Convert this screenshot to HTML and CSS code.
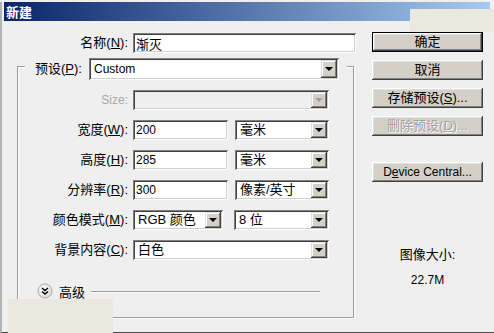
FILE: index.html
```html
<!DOCTYPE html>
<html lang="zh-CN">
<head>
<meta charset="UTF-8">
<title>新建</title>
<link rel="stylesheet" href="styles.css">
</head>
<body>
<div class="window">
  <div class="titlebar">新建</div>
  <div class="body">
    <div class="main">
      <div class="name-row">
        <label class="label">名称(<u>N</u>):</label>
        <input class="field name-field" value="渐灭">
      </div>
      <div class="group">
        <div class="preset-row">
          <label class="label">预设(<u>P</u>):</label>
          <div class="combo preset-combo"><span class="combo-value latin">Custom</span><span class="arrow"></span></div>
        </div>
        <div class="form-grid">
          <label class="label disabled latin">Size:</label>
          <div class="combo combo-disabled wide"><span class="combo-value"></span><span class="arrow"></span></div>

          <label class="label">宽度(<u>W</u>):</label>
          <div class="ctrl">
            <input class="field num-field" value="200">
            <div class="combo unit"><span class="combo-value">毫米</span><span class="arrow"></span></div>
          </div>

          <label class="label">高度(<u>H</u>):</label>
          <div class="ctrl">
            <input class="field num-field" value="285">
            <div class="combo unit"><span class="combo-value">毫米</span><span class="arrow"></span></div>
          </div>

          <label class="label">分辨率(<u>R</u>):</label>
          <div class="ctrl">
            <input class="field num-field" value="300">
            <div class="combo unit"><span class="combo-value">像素/英寸</span><span class="arrow"></span></div>
          </div>

          <label class="label">颜色模式(<u>M</u>):</label>
          <div class="ctrl ctrl-mode">
            <div class="combo mode"><span class="combo-value">RGB 颜色</span><span class="arrow"></span></div>
            <div class="combo bits"><span class="combo-value">8 位</span><span class="arrow"></span></div>
          </div>

          <label class="label">背景内容(<u>C</u>):</label>
          <div class="combo wide"><span class="combo-value">白色</span><span class="arrow"></span></div>
        </div>
        <div class="advanced">
          <svg class="adv-icon" width="16" height="16" viewBox="0 0 16 16">
            <defs>
              <radialGradient id="knob" cx="0.4" cy="0.35" r="0.7">
                <stop offset="0" stop-color="#ffffff"/>
                <stop offset="1" stop-color="#d8d8d8"/>
              </radialGradient>
            </defs>
            <circle cx="8" cy="8" r="7" fill="url(#knob)" stroke="#a8a8a8"/>
            <polyline points="5,5 8,7.5 11,5" fill="none" stroke="#000" stroke-width="1.5"/>
            <polyline points="5,8.5 8,11 11,8.5" fill="none" stroke="#000" stroke-width="1.5"/>
          </svg>
          <span class="adv-text">高级</span>
          <span class="adv-line"></span>
        </div>
      </div>
    </div>
    <div class="side">
      <button class="btn btn-default">确定</button>
      <button class="btn">取消</button>
      <button class="btn">存储预设(<u>S</u>)...</button>
      <button class="btn btn-disabled">删除预设(<u>D</u>)...</button>
      <button class="btn btn-device latin">D<u>e</u>vice Central...</button>
      <div class="image-size">
        <div>图像大小:</div>
        <div class="size-value latin">22.7M</div>
      </div>
    </div>
  </div>
  <div class="patch patch-top"></div>
  <div class="patch patch-bottom"></div>
</div>
</body>
</html>
```

FILE: styles.css
```css
body {
  margin: 0;
  background-color: #efefef;
  font-family: "Liberation Sans", "Noto Sans CJK SC", sans-serif;
  font-size: 13px;
  color: #000;
}
.window {
  position: relative;
  width: 494px;
  height: 333px;
  box-sizing: border-box;
  border-left: 2px solid #b4b4b4;
  border-bottom: 3px solid #4a4a4a;
  background-color: #efefef;
}
.titlebar {
  height: 19px;
  margin: 2px 4px 0 2px;
  padding-left: 2px;
  background: linear-gradient(to right, #0a246a, #a6caf0);
  color: #fff;
  font-family: "Noto Sans CJK SC", sans-serif;
  font-weight: bold;
  font-size: 13px;
  line-height: 19px;
}
.body {
  display: flex;
  padding-top: 12px;
}
.main {
  width: 354px;
}
.latin {
  font-family: "Liberation Sans", sans-serif;
  font-size: 12px;
}
.label {
  text-align: right;
  white-space: nowrap;
  line-height: 20px;
}
.label.disabled {
  color: #a8a8a8;
}
u {
  text-decoration-thickness: 1px;
  text-underline-offset: 1px;
}

/* sunken fields */
.field {
  height: 20px;
  box-sizing: border-box;
  border: none;
  outline: none;
  margin: 0;
  padding: 0 3px;
  background-color: #fff;
  box-shadow: inset 1px 1px #808080, inset -1px -1px #fff, inset 2px 2px #404040, inset -2px -2px #d4d0c8;
  font-family: "Liberation Sans", sans-serif;
  font-size: 12px;
  color: #000;
}
.name-row {
  display: flex;
  align-items: center;
}
.name-row .label {
  width: 126px;
  margin-right: 5px;
}
.name-field {
  width: 223px;
  font-family: "Noto Sans CJK SC", sans-serif;
  font-size: 13px;
}
.num-field {
  width: 95px;
}

/* combos */
.combo {
  display: flex;
  height: 20px;
  box-sizing: border-box;
  padding: 2px;
  background-color: #fff;
  box-shadow: inset 1px 1px #808080, inset -1px -1px #fff, inset 2px 2px #404040, inset -2px -2px #d4d0c8;
}
.combo-value {
  flex: 1;
  padding-left: 3px;
  line-height: 16px;
  white-space: nowrap;
  overflow: hidden;
}
.arrow {
  position: relative;
  width: 16px;
  background-color: #d4d0c8;
  box-shadow: inset -1px -1px #404040, inset 1px 1px #dfdfdf, inset -2px -2px #808080, inset 2px 2px #fff;
}
.arrow::after {
  content: "";
  position: absolute;
  left: 4px;
  top: 50%;
  margin-top: -2px;
  border-left: 4px solid transparent;
  border-right: 4px solid transparent;
  border-top: 4px solid #000;
}
.combo-disabled {
  background-color: #efefef;
}
.combo-disabled .arrow::after {
  border-top-color: #a0a0a0;
}
.preset-combo {
  width: 250px;
  height: 22px;
}
.preset-combo .combo-value {
  line-height: 18px;
}
.wide {
  width: 196px;
}
.unit {
  width: 94px;
}
.mode {
  width: 90px;
}
.bits {
  width: 95px;
}

/* group box */
.group {
  margin: 13px 0 0 15px;
  width: 337px;
  height: 252px;
  box-sizing: border-box;
  border: 1px solid #9c9c9c;
  box-shadow: inset 1px 1px #fff, 1px 1px #fff;
}
.preset-row {
  display: flex;
  align-items: center;
  gap: 7px;
  width: fit-content;
  margin: -9px 0 0 7px;
  padding: 0 8px 0 10px;
  background-color: #efefef;
}
.form-grid {
  display: grid;
  grid-template-columns: 110px auto;
  column-gap: 5px;
  row-gap: 10px;
  margin-top: 10px;
  align-items: center;
}
.ctrl {
  display: flex;
  gap: 7px;
}
.ctrl-mode {
  gap: 11px;
}
.advanced {
  display: flex;
  align-items: center;
  height: 16px;
  margin: 23px 33px 0 19px;
}
.adv-text {
  margin-left: 6px;
}
.adv-line {
  flex: 1;
  height: 1px;
  margin-left: 6px;
  background-color: #9c9c9c;
  box-shadow: 0 1px #fff;
}

/* buttons */
.side {
  width: 111px;
  margin: -1px 0 0 16px;
  display: flex;
  flex-direction: column;
}
.btn {
  height: 20px;
  margin: 0 0 8px;
  padding: 0;
  border: none;
  background-color: #d4d0c8;
  box-shadow: inset -1px -1px #404040, inset 1px 1px #fff, inset -2px -2px #808080, inset 2px 2px #dfdfdf;
  font-family: "Liberation Sans", "Noto Sans CJK SC", sans-serif;
  font-size: 13px;
  color: #000;
  line-height: 18px;
}
.btn-default {
  border: 1px solid #000;
}
.btn-disabled {
  color: #a0a0a0;
  text-shadow: 1px 1px #fff;
}
.btn-device {
  margin-top: 18px;
  font-size: 12px;
}
.image-size {
  margin-top: 57px;
  text-align: center;
  line-height: 16px;
}
.size-value {
  margin-top: 9px;
}

/* washed-out areas of the capture */
.patch {
  position: absolute;
  background-color: #ebe9df;
}
.patch-top {
  left: 408px;
  top: 7px;
  right: 0;
  height: 23px;
}
.patch-bottom {
  left: 6px;
  top: 297px;
  width: 105px;
  bottom: -3px;
}
```
